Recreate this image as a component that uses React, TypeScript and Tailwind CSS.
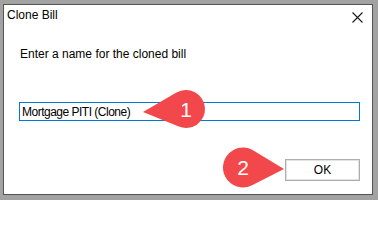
import React from 'react';

type CalloutProps = { cx: number; cy: number; r: number; tx: number; ty: number; label: string };

// teardrop marker: circle with a point running out to (tx, ty)
function Callout({ cx, cy, r, tx, ty, label }: CalloutProps) {
  const dx = tx - cx;
  const dy = ty - cy;
  const d = Math.hypot(dx, dy);
  const a = Math.atan2(dy, dx);
  const t = Math.acos(r / d);
  const p1 = [cx + r * Math.cos(a + t), cy + r * Math.sin(a + t)];
  const p2 = [cx + r * Math.cos(a - t), cy + r * Math.sin(a - t)];
  const path = `M${tx},${ty} L${p1[0]},${p1[1]} A${r},${r} 0 1 1 ${p2[0]},${p2[1]} Z`;
  return (
    <svg className="absolute left-0 top-0 pointer-events-none" width={378} height={200} viewBox="0 0 378 200">
      <path d={path} fill="#f2484b" />
      <text
        x={cx}
        y={cy + 7.5}
        textAnchor="middle"
        fill="#ffffff"
        fontSize="21"
        fontFamily="'Liberation Sans', Arial, sans-serif"
      >
        {label}
      </text>
    </svg>
  );
}

export default function App() {
  return (
    <div className="relative w-[378px] h-[200px] bg-[#a2a2a2] pl-[3px] pt-[4px] overflow-hidden font-['Liberation_Sans',Arial,sans-serif] text-[12px] text-black">
      <div className="w-[370px] h-[191px] bg-white border border-[#555555] flex flex-col">
        <div className="flex items-start justify-between h-[30px] pl-[3px] pr-[9px] pt-[1px]">
          <span className="leading-[16px] mt-[1px]">Clone Bill</span>
          <svg width="11" height="11" viewBox="0 0 11 11" className="mt-[6px]">
            <path d="M0.5 0.5 L10.5 10.5 M10.5 0.5 L0.5 10.5" stroke="#1a1a1a" strokeWidth="1.1" />
          </svg>
        </div>

        <p className="pl-[16px] mt-[11px] leading-[16px]">Enter a name for the cloned bill</p>

        <input
          readOnly
          value="Mortgage PITI (Clone)"
          className="ml-[15px] mt-[40px] w-[341px] h-[19px] border border-[#0078d7] px-[2px] text-[12px] leading-[16px] tracking-[-0.5px] outline-none bg-white"
        />

        <div className="flex justify-end pr-[12px] mt-[38px]">
          <button className="w-[75px] h-[22px] border border-[#adadad] bg-white flex items-center justify-center">
            <span className="w-full h-full border border-[#e3e3e3] flex items-center justify-center leading-none">
              OK
            </span>
          </button>
        </div>
      </div>

      <Callout cx={186} cy={109} r={19} tx={143} ty={112} label="1" />
      <Callout cx={243} cy={167.5} r={20} tx={284} ty={169} label="2" />
    </div>
  );
}
